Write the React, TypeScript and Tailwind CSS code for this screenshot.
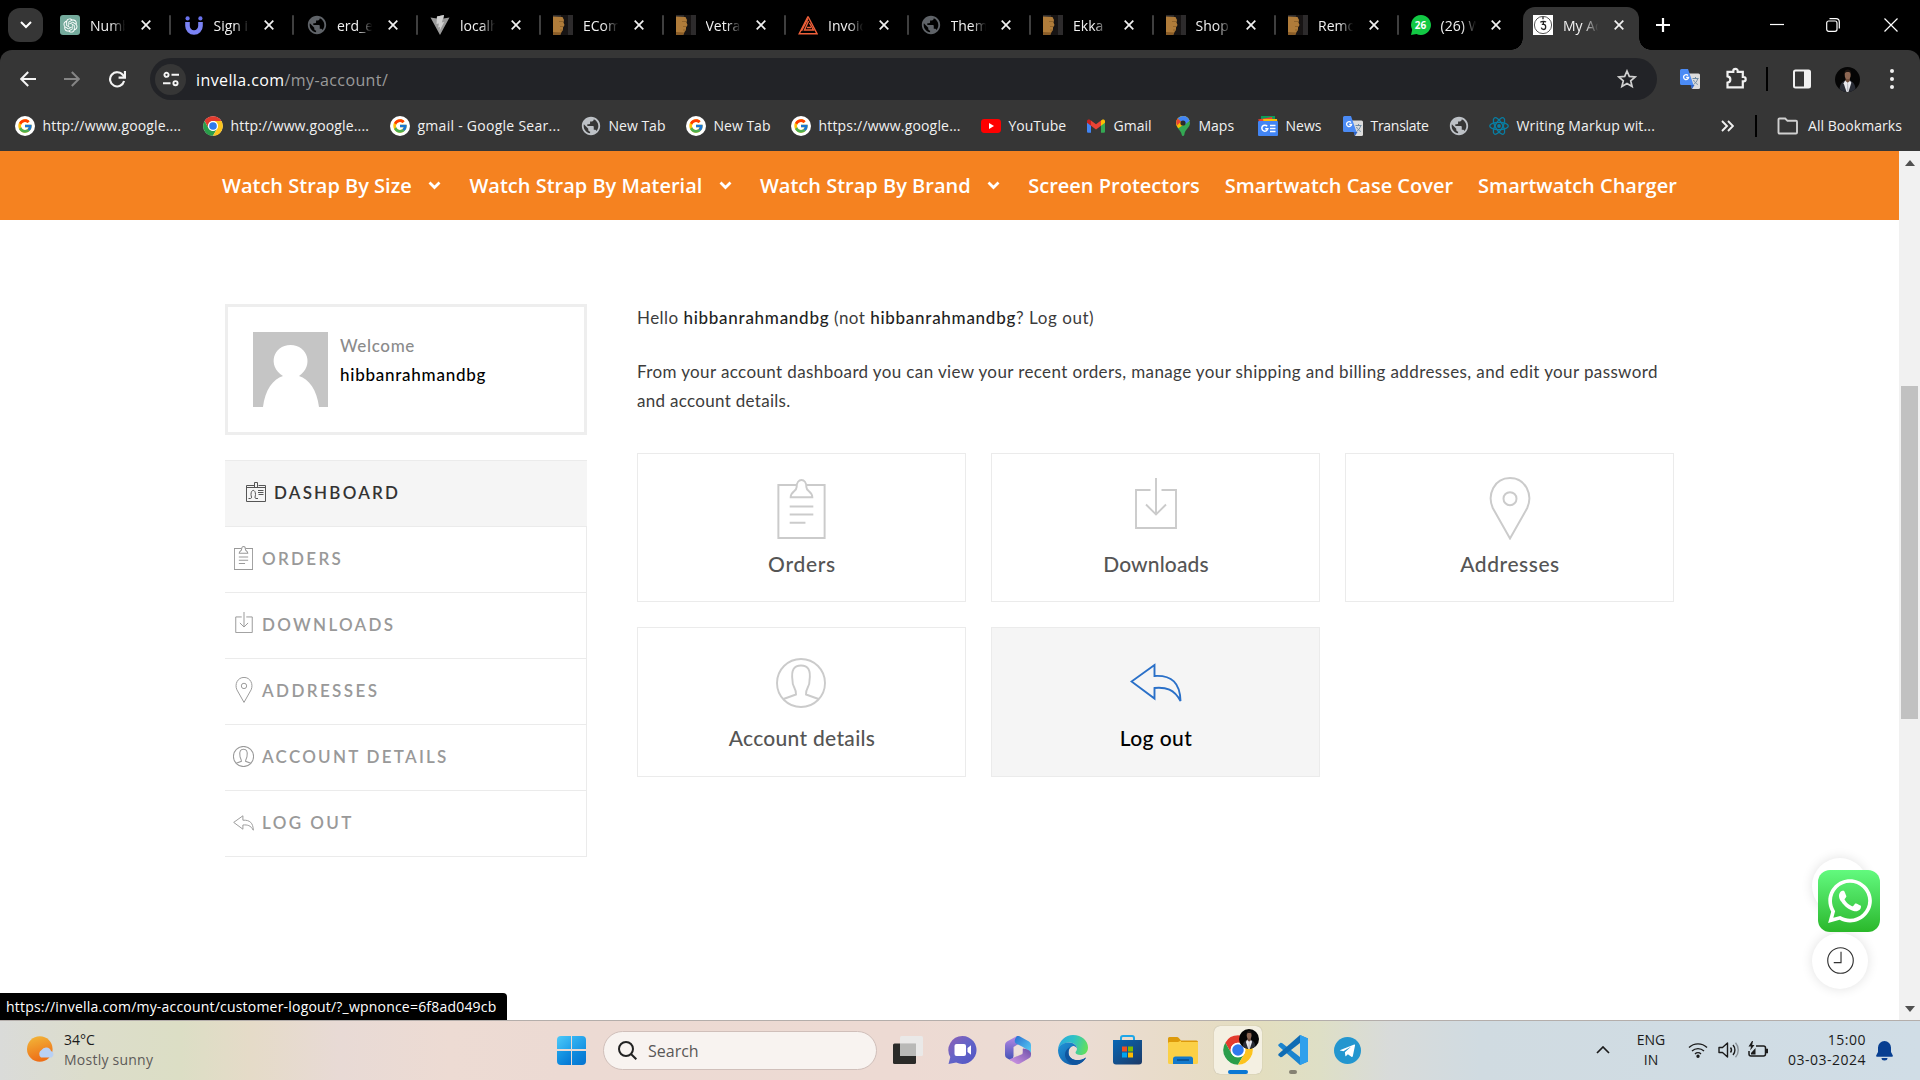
import React from "react";
import { FcGoogle } from "react-icons/fc";
import { MdPublic } from "react-icons/md";
import { RiOpenaiFill } from "react-icons/ri";
import { FaWhatsapp } from "react-icons/fa";

type P = { className?: string };

/* ---------- favicons ---------- */

const OpenAi = () => (
  <div className="flex size-5 items-center justify-center rounded-[3px] bg-[#74aa9c] text-white">
    <RiOpenaiFill className="size-[17px]" />
  </div>
);

const Magnet = () => (
  <svg viewBox="0 0 20 20" className="size-5">
    <path d="M3.5 7v4a6.5 6.5 0 0 0 13 0V7" fill="none" stroke="#7b83f5" strokeWidth="4.6" />
    <circle cx="3.6" cy="3.4" r="2.1" fill="#6a72ee" />
    <circle cx="16.4" cy="3.4" r="2.1" fill="#6a72ee" />
  </svg>
);

const Globe = ({ className = "text-[#5f6368]" }: P) => (
  <div className="flex size-5 items-center justify-center">
    <div className={className}>
      <MdPublic className="size-[22px]" />
    </div>
  </div>
);

const Vite = () => (
  <svg viewBox="0 0 20 20" className="size-5">
    <path d="M.5 2.500 10 20 19.500 2.500 13.500 3.500 14 0 7 1.500 6.800 3.600Z" fill="#9a9a9a" />
    <path d="M14 0 7 1.500 6.500 9l2.400-.5-.8 4 2-.6L9.500 16l4.700-9-2.400.4Z" fill="#d0d0d0" />
  </svg>
);

const Portrait = () => (
  <svg viewBox="0 0 20 20" className="size-5">
    <rect width="20" height="20" fill="#2d2b2c" />
    <path d="M8 0h7v20H8Z" fill="#171414" />
    <path d="M0 1.500 9.500 2 11 5 10.500 7.500 11.500 10 10 12.500 10 15 8.500 17 7 20H0Z" fill="#b07c3a" />
    <path d="M0 17 8.500 17.500 7 20H0Z" fill="#8a5d28" />
    <path d="M6 6.500h4M7 11.500h3.500M7 15h3" stroke="#7a5423" strokeWidth=".6" />
  </svg>
);

const Triangle = () => (
  <svg viewBox="0 0 20 20" className="size-5" fill="none" stroke="#f0603a" strokeWidth="1.400">
    <path d="M10 1.500 1.200 18.700H19L10 1.500" />
    <path d="M10.500 6 6.500 15h9L11.500 8M3.500 16 10 3.500M9 12.500h4" />
  </svg>
);

const WhatsTab = () => (
  <div className="relative flex size-5 items-center justify-center">
    <svg viewBox="0 0 20 20" className="absolute inset-0 size-5">
      <path d="M10 0a10 10 0 1 1-4.600 18.900L0 20l1.200-5.300A10 10 0 0 1 10 0Z" fill="#12c944" />
    </svg>
    <span className="relative text-[10px] font-bold text-white">26</span>
  </div>
);

const Invella = () => (
  <svg viewBox="0 0 20 20" className="size-5">
    <rect width="20" height="20" fill="#fff" />
    <circle cx="10" cy="10" r="8.600" fill="none" stroke="#444" strokeWidth=".9" />
    <path d="M7.300 7.200C9 6 12 6 13 7.200M10 2v2.200M8.800 9.300h1.900c2.600 0 2.600 5 .2 5.200-1.500 0-2.400-.8-2.600-1.800M10.400 9.300V6.500" fill="none" stroke="#222" strokeWidth="1.300" />
  </svg>
);

const Chrome = ({ className = "size-5" }: P) => (
  <svg viewBox="0 0 48 48" className={className}>
    <circle cx="24" cy="24" r="23.500" fill="#fff" />
    <path d="M3.640 12.250A23.500 23.500 0 0 1 44.360 12.250H24A11.750 11.750 0 0 0 13.820 29.870Z" fill="#e33b2e" />
    <path d="M3.640 12.250 13.820 29.870A11.750 11.750 0 0 0 34.180 29.870L24 47.500A23.500 23.500 0 0 1 3.640 12.250Z" fill="#2a9d4a" />
    <path d="M44.360 12.250A23.500 23.500 0 0 1 24 47.500L34.180 29.870A11.750 11.750 0 0 0 24 12.250Z" fill="#fcc31e" />
    <circle cx="24" cy="24" r="11.750" fill="#fff" />
    <circle cx="24" cy="24" r="9.200" fill="#2f79ee" />
  </svg>
);

const Google = () => (
  <div className="flex size-5 items-center justify-center rounded-full bg-white">
    <FcGoogle className="size-4" />
  </div>
);

const YouTube = () => (
  <svg viewBox="0 0 20 20" className="size-5">
    <rect y="3" width="20" height="14" rx="3.400" fill="#f00" />
    <path d="M8 7v6l5-3Z" fill="#fff" />
  </svg>
);

const Gmail = () => (
  <svg viewBox="0 0 20 20" className="size-5">
    <path d="M1 5v10.500c0 .8.600 1.300 1.300 1.300H5V8Z" fill="#4285f4" />
    <path d="M19 5v10.500c0 .8-.6 1.300-1.300 1.300H15V8Z" fill="#34a853" />
    <path d="M5 4.500v5.300l5 3.700 5-3.700V4.500l-5 3.800Z" fill="#ea4335" />
    <path d="M1 5v1.800l4 3V4.500l-.8-.6C2.900 2.900 1 3.500 1 5Z" fill="#c5221f" />
    <path d="M19 5v1.800l-4 3V4.500l.8-.6C17.100 2.900 19 3.500 19 5Z" fill="#fbbc04" />
  </svg>
);

const Maps = () => (
  <svg viewBox="0 0 14 20" className="h-5 w-3.5">
    <path d="M7 0a7 7 0 0 1 7 7c0 4.500-5 6-5.600 11.500Q8 20 7 20t-1.400-1.500C5.200 14.500 0 12 0 7a7 7 0 0 1 7-7Z" fill="#34a853" />
    <path d="M7 0a7 7 0 0 1 6.600 4.700L2.300 12.200C1 10.700 0 9 0 7a7 7 0 0 1 7-7Z" fill="#fbbc04" />
    <path d="M7 0a7 7 0 0 1 6.600 4.700L8.500 9 1.600 2.500A7 7 0 0 1 7 0Z" fill="#4285f4" />
    <path d="M1.600 2.500 5 5.500 1 9.500A7 7 0 0 1 1.600 2.500Z" fill="#ea4335" />
    <circle cx="7" cy="7" r="2.600" fill="#2b2b2b" />
  </svg>
);

const News = () => (
  <svg viewBox="0 0 20 20" className="size-5">
    <path d="M3 0h14v6H3Z" fill="#0c9d58" />
    <path d="M0 3.500 14 1l1 4H1Z" fill="#ea4335" />
    <path d="M5 3h14l.5 5H6Z" fill="#fbbc04" />
    <rect y="5" width="20" height="15" rx="1" fill="#4285f4" />
    <path d="M12 9.500h5.500M12 12.500h5.500M12 15.500h5.500" stroke="#fff" strokeWidth="1.500" />
    <path d="M9.200 10.300a3 3 0 1 0 .6 2.400H7.200" fill="none" stroke="#fff" strokeWidth="1.500" />
  </svg>
);

const TranslateIcon = () => (
  <svg viewBox="0 0 20 20" className="size-5">
    <path d="M8 4.500h10.500A1.500 1.500 0 0 1 20 6v12.500a1.500 1.500 0 0 1-1.500 1.500H12Z" fill="#dcdcdc" />
    <path d="M12.500 9.500h6M15.500 8v1.500M17.800 9.500c-.8 3-2.800 5-4.300 6M13.500 11c.8 2 2.500 3.500 4.300 4.500" fill="none" stroke="#6f8ba3" strokeWidth="1" />
    <path d="M12 20l-1.500-4h4Z" fill="#2d63c8" />
    <path d="M1.500 0H8l5.500 16h-12A1.500 1.500 0 0 1 0 14.500v-13A1.500 1.500 0 0 1 1.500 0Z" fill="#4b8bf5" />
    <path d="M8 6.500a2.500 2.500 0 1 0 .6 2H6.200" fill="none" stroke="#fff" strokeWidth="1.300" />
  </svg>
);

const ReactIcon = () => (
  <svg viewBox="0 0 20 20" className="size-5" fill="none" stroke="#087ea4" strokeWidth="1.300">
    <ellipse cx="10" cy="10" rx="9.300" ry="3.700" />
    <ellipse cx="10" cy="10" rx="9.300" ry="3.700" transform="rotate(60 10 10)" />
    <ellipse cx="10" cy="10" rx="9.300" ry="3.700" transform="rotate(120 10 10)" />
    <circle cx="10" cy="10" r="1.900" fill="#087ea4" stroke="none" />
  </svg>
);

const Profile = ({ className = "size-[25px]" }: P) => (
  <svg viewBox="0 0 26 26" className={className}>
    <defs>
      <clipPath id="profileClip">
        <circle cx="13" cy="13" r="13" />
      </clipPath>
    </defs>
    <g clipPath="url(#profileClip)">
      <rect width="26" height="26" fill="#050505" />
      <path d="M4.500 26c0-7 2-10.500 6-12h5c4 1.500 6 5 6 12Z" fill="#292c35" />
      <path d="M10.500 14h5l1.500 2.500-3 9.500h-2L9 17Z" fill="#e9e9ee" />
      <path d="M12.700 17h.9l.4 7-.8 2-.8-2Z" fill="#b9bac2" />
      <path d="M11 11h4.500v3.500l-2.300 2-2.200-2Z" fill="#6e4d3c" />
      <ellipse cx="13.200" cy="8" rx="3.100" ry="4.700" fill="#8d6753" />
      <path d="M9.800 7.200C9.200 1 17.300 1 16.700 7.200 16 4.700 10.500 4.700 9.800 7.200Z" fill="#1d1512" />
    </g>
  </svg>
);

/* ---------- browser chrome ---------- */

const Cross = () => (
  <svg viewBox="0 0 10 10" className="size-2.5" stroke="#f1f1f1" strokeWidth="1.700" fill="none">
    <path d="M.7.700 9.300 9.300M9.300.700.7 9.300" />
  </svg>
);

const tabs: { icon: React.ReactNode; title: string; w: string }[] = [
  { icon: <OpenAi />, title: "Numb", w: "w-[123.5px]" },
  { icon: <Magnet />, title: "Sign in", w: "w-[123.5px]" },
  { icon: <Globe />, title: "erd_e", w: "w-[123px]" },
  { icon: <Vite />, title: "localh", w: "w-[123px]" },
  { icon: <Portrait />, title: "ECom", w: "w-[122.5px]" },
  { icon: <Portrait />, title: "Vetra", w: "w-[122.5px]" },
  { icon: <Triangle />, title: "Invoic", w: "w-[122.5px]" },
  { icon: <Globe />, title: "Them", w: "w-[122.5px]" },
  { icon: <Portrait />, title: "Ekka", w: "w-[122.5px]" },
  { icon: <Portrait />, title: "Shop", w: "w-[122.5px]" },
  { icon: <Portrait />, title: "Remo", w: "w-[122.5px]" },
  { icon: <WhatsTab />, title: "(26) W", w: "w-[122.5px]" },
];

const TabBody = ({ icon, title }: { icon: React.ReactNode; title: string }) => (
  <>
    {icon}
    <span className="ml-2.5 w-[36px] shrink-0 overflow-hidden pt-px text-[14px] leading-5 whitespace-nowrap text-[#f1f1f1] [mask-image:linear-gradient(to_right,#000_58%,transparent_98%)]">
      {title}
    </span>
    <span className="ml-[14.5px]">
      <Cross />
    </span>
  </>
);

const TabStrip = () => (
  <div className="flex h-[50px] bg-black">
    <div className="mt-2 ml-2 flex h-[34px] w-[35px] items-center justify-center rounded-xl bg-[#363636]">
      <svg viewBox="0 0 12 8" className="h-2 w-3" fill="none" stroke="#fff" strokeWidth="2">
        <path d="m1 1 5 5 5-5" />
      </svg>
    </div>
    <div className="ml-[5px] flex">
      {tabs.map((t, i) => (
        <div key={i} className={`flex items-center pl-3 ${t.w}`}>
          <TabBody icon={t.icon} title={t.title} />
          {i < tabs.length - 1 && <span className="ml-[18px] h-5 w-[2px] rounded bg-[#3f3f3f]" />}
        </div>
      ))}
    </div>
    <div className="relative mt-[7px] ml-[2px] flex h-[43px] w-[116px] items-center rounded-t-xl bg-[#363636] pb-[7px] pl-[10px]">
      <span className="absolute bottom-0 -left-3 size-3 bg-[radial-gradient(circle_at_0_0,#000_11.5px,#363636_12px)]" />
      <span className="absolute -right-3 bottom-0 size-3 bg-[radial-gradient(circle_at_100%_0,#000_11.5px,#363636_12px)]" />
      <TabBody icon={<Invella />} title="My Ac" />
    </div>
    <svg viewBox="0 0 14 14" className="mt-[18px] ml-[17px] size-3.5" stroke="#fff" strokeWidth="2.200">
      <path d="M7 0v14M0 7h14" />
    </svg>
    <svg viewBox="0 0 14 14" className="mt-[18px] ml-auto size-3.5" stroke="#fff" strokeWidth="1.200">
      <path d="M0 6.500h14" />
    </svg>
    <svg viewBox="0 0 14 14" className="mt-[18px] ml-[42px] size-3.5" stroke="#fff" strokeWidth="1.200" fill="none">
      <rect x=".7" y="3" width="10.300" height="10.300" rx="2" />
      <path d="M3.500.700H10a3.300 3.300 0 0 1 3.300 3.300v6.500" />
    </svg>
    <svg viewBox="0 0 14 14" className="mt-[18px] mr-[22px] ml-11 size-3.5" stroke="#fff" strokeWidth="1.200">
      <path d="m.5.500 13 13m0-13-13 13" />
    </svg>
  </div>
);

const Toolbar = () => (
  <div className="bg-black">
    <div className="flex h-[58px] items-center rounded-t-xl bg-[#363636]">
      <svg viewBox="0 0 16 16" className="ml-5 size-4" fill="none" stroke="#f4f4f4" strokeWidth="2">
        <path d="M16 8H1.500M8.200 1 1.200 8l7 7" />
      </svg>
      <svg viewBox="0 0 16 16" className="ml-[28px] size-4" fill="none" stroke="#858585" strokeWidth="2">
        <path d="M0 8h14.500M7.800 1l7 7-7 7" />
      </svg>
      <svg viewBox="0 0 16 16" className="ml-[29px] size-[17px]" fill="none" stroke="#f4f4f4" strokeWidth="2">
        <path d="M14.200 9.500A6.700 6.700 0 1 1 13 3.700l1.600 1.800M15 0v6.200H9" />
      </svg>
      <div className="ml-6 flex h-[42px] w-[1507px] items-center rounded-full bg-[#222327] pl-[5px]">
        <div className="flex size-[31px] items-center justify-center rounded-full bg-[#363636]">
          <svg viewBox="0 0 16 16" className="size-4" fill="none" stroke="#f4f4f4" strokeWidth="1.900">
            <circle cx="3.500" cy="3.800" r="2.100" />
            <path d="M8.500 3.800H16M0 12.200h7.500" />
            <circle cx="12.500" cy="12.200" r="2.100" />
          </svg>
        </div>
        <span className="ml-[10px] pt-0.5 text-[16px] leading-6 tracking-[0.4px] text-white">
          invella.com<span className="text-[#9a9a9a]">/my-account/</span>
        </span>
        <svg viewBox="0 0 20 20" className="mr-5 ml-auto size-5" fill="none" stroke="#d0d0d0" strokeWidth="1.700">
          <path d="m10 2 2.300 5.400 5.900.5-4.500 3.900 1.400 5.700L10 14.400l-5.100 3.100 1.400-5.700L1.800 7.900l5.900-.5Z" />
        </svg>
      </div>
      <div className="ml-[23px]">
        <TranslateIcon />
      </div>
      <svg viewBox="0 0 24 24" className="ml-[24px] size-6 -translate-y-px" fill="none" stroke="#f1f1f1" strokeWidth="2.200">
        <path d="M3.500 5.800H9.300V5a2.200 2.200 0 0 1 4.400 0v.8H18.800V11h.7a2.200 2.200 0 0 1 0 4.400h-.7v6H3.500v-4.800c3.800-.5 3.800-5.700 0-6.200Z" />
      </svg>
      <span className="ml-[18px] h-6 w-[2px] bg-black" />
      <svg viewBox="0 0 20 20" className="ml-[24px] size-5" fill="none" stroke="#f1f1f1" strokeWidth="2">
        <rect x="2" y="1.500" width="16" height="17" rx="1.500" />
        <path d="M12 2h6v16h-6Z" fill="#f1f1f1" stroke="none" />
      </svg>
      <span className="ml-[23px]">
        <Profile />
      </span>
      <svg viewBox="0 0 4 20" className="ml-[30px] h-5 w-1" fill="#f1f1f1">
        <circle cx="2" cy="2" r="2" />
        <circle cx="2" cy="10" r="2" />
        <circle cx="2" cy="18" r="2" />
      </svg>
    </div>
  </div>
);

const bookmarks: { w: string; icon: React.ReactNode; text?: string; t?: string }[] = [
  { w: "w-[188px]", icon: <Google />, text: "http://www.google....", t: "tracking-[0.15px]" },
  { w: "w-[187px]", icon: <Chrome />, text: "http://www.google....", t: "tracking-[0.15px]" },
  { w: "w-[191px]", icon: <Google />, text: "gmail - Google Sear...", t: "tracking-[0.27px]" },
  { w: "w-[105px]", icon: <Globe className="text-[#bdc1c6]" />, text: "New Tab" },
  { w: "w-[105px]", icon: <Google />, text: "New Tab" },
  { w: "w-[190px]", icon: <Google />, text: "https://www.google...", t: "tracking-[0.18px]" },
  { w: "w-[105px]", icon: <YouTube />, text: "YouTube" },
  { w: "w-[89px]", icon: <Gmail />, text: "Gmail" },
  { w: "w-[83px]", icon: <Maps />, text: "Maps" },
  { w: "w-[85px]", icon: <News />, text: "News" },
  { w: "w-[106px]", icon: <TranslateIcon />, text: "Translate", t: "tracking-[-0.28px]" },
  { w: "w-[40px]", icon: <Globe className="text-[#bdc1c6]" /> },
  { w: "w-[232px]", icon: <ReactIcon />, text: "Writing Markup wit...", t: "tracking-[0.16px]" },
];

const Bookmarks = () => (
  <div className="flex h-[43px] items-center bg-[#363636] pb-[7px] pl-[15px] text-[14px] leading-5 text-[#f1f1f1]">
    {bookmarks.map((b, i) => (
      <div key={i} className={`flex shrink-0 items-center gap-[7.5px] whitespace-nowrap ${b.w}`}>
        <span className="flex min-w-4 shrink-0 justify-center">{b.icon}</span>
        {b.text && <span className={b.t ?? ""}>{b.text}</span>}
      </div>
    ))}
    <svg viewBox="0 0 13 12" className="h-3 w-[13px]" fill="none" stroke="#f1f1f1" strokeWidth="1.900">
      <path d="m1 1 5 5-5 5M7 1l5 5-5 5" />
    </svg>
    <span className="ml-[21px] h-[22px] w-[2px] bg-black" />
    <svg viewBox="0 0 22 18" className="ml-5 h-[18px] w-[22px]" fill="none" stroke="#d0d0d0" strokeWidth="1.900">
      <path d="M2.500 1.500h5.700l2.300 2.300h8.500a1 1 0 0 1 1 1v10.700a1 1 0 0 1-1 1h-16.500a1 1 0 0 1-1-1v-13a1 1 0 0 1 1-1Z" />
    </svg>
    <span className="ml-[9px] tracking-[0.05px]">All Bookmarks</span>
  </div>
);

/* ---------- line icons of the account area ---------- */

const ClipboardIcon = ({ className }: P) => (
  <svg viewBox="0 0 49 61" className={className} fill="none" stroke="currentColor">
    <path d="M19 6H1v54h47V6H30" />
    <path d="M19.500 8.500c0-10 10-10 10 0 0 4 6 4 6 10h-22c0-6 6-6 6-10Z" />
    <path d="M12.500 28h24M12.500 36h24M12.500 44.500h16" />
  </svg>
);
const DownloadIcon = ({ className }: P) => (
  <svg viewBox="0 0 42 51" className={className} fill="none" stroke="currentColor">
    <path d="M15.500 12H1v38h40V12H26.500M21 0v36.500M11 26.500l10 10 10-10" />
  </svg>
);
const PinIcon = ({ className }: P) => (
  <svg viewBox="0 0 42 64" className={className} fill="none" stroke="currentColor">
    <path d="M21 62.500 3.500 31.500C-2.500 18 5 1 21 1s23.500 17 17.500 30.500Z" />
    <circle cx="21" cy="22" r="6.600" />
  </svg>
);
const AccountIcon = ({ className }: P) => (
  <svg viewBox="0 0 50 50" className={className} fill="none" stroke="currentColor">
    <circle cx="25" cy="25" r="24" />
    <path d="M7.500 41 20 36.500C20.500 30 16 29 16.500 22.500 15 12 18 7.500 25 7.500s10 4.500 8.500 15C34 29 29.500 30 30 36.500L42.500 41" />
  </svg>
);
const LogoutIcon = ({ className }: P) => (
  <svg viewBox="0 0 52 40" className={className} fill="none" stroke="currentColor">
    <path d="M24.500 2 1.500 18.500l23 17V25C36 24 44 26 50.500 38 50 20 42 12 24.500 13Z" />
  </svg>
);
const BadgeIcon = ({ className }: P) => (
  <svg viewBox="0 0 20 20" className={className} fill="none" stroke="currentColor" strokeWidth="1">
    <path d="M.500 3.500v16h19v-16h-7M.500 3.500h8M.500 5.500h19M8.500 5.500v-5h3v5M12 8.500h5.500M12 10.500h5.500M12.500 12.500h5" />
    <path d="M2.500 16.500h2c2-.5.500-2 .5-4 0-5.500 4.500-5.500 4.500 0 0 2-1.500 3.500.5 4h2" />
  </svg>
);

const Caret = ({ className = "" }: P) => (
  <svg viewBox="0 0 13 10" className={`h-2.5 w-[13px] ${className}`} fill="none" stroke="#fff" strokeWidth="2.800">
    <path d="m1.500 1.500 5 5 5-5" />
  </svg>
);

const navItems = [
  { text: "Watch Strap By Size", caret: true },
  { text: "Watch Strap By Material", caret: true },
  { text: "Watch Strap By Brand", caret: true },
  { text: "Screen Protectors", caret: false },
  { text: "Smartwatch Case Cover", caret: false },
  { text: "Smartwatch Charger", caret: false },
];

const side = [
  { text: "ORDERS", icon: <ClipboardIcon className="h-6 w-[19px] -translate-y-[2px] [stroke-width:2.6]" />, t: "tracking-[2.3px]" },
  { text: "DOWNLOADS", icon: <DownloadIcon className="h-[21px] w-[18px] -translate-y-[3px] [stroke-width:2.4]" />, t: "tracking-[2.3px]" },
  { text: "ADDRESSES", icon: <PinIcon className="h-[26px] w-[18px] -translate-y-[2px] [stroke-width:2.4]" />, t: "tracking-[2.4px]" },
  { text: "ACCOUNT DETAILS", icon: <AccountIcon className="size-[21px] -translate-y-px [stroke-width:2.4]" />, t: "tracking-[2.25px]" },
  { text: "LOG OUT", icon: <LogoutIcon className="h-4 w-[21px] -translate-y-px [stroke-width:2.4]" />, t: "tracking-[2.4px]" },
];

const cards = [
  { text: "Orders", icon: <ClipboardIcon className="h-[60px] w-[49px] -translate-y-px [stroke-width:2]" />, t: "tracking-[0.7px]" },
  { text: "Downloads", icon: <DownloadIcon className="h-[51px] w-[42px] -translate-y-[6px] [stroke-width:1.9]" />, t: "tracking-[0.13px]" },
  { text: "Addresses", icon: <PinIcon className="h-[63px] w-[42px] -translate-y-px [stroke-width:2]" />, t: "tracking-[0.55px]" },
  { text: "Account details", icon: <AccountIcon className="size-[50px] -translate-x-px -translate-y-px [stroke-width:1.9]" />, t: "tracking-[0.3px]" },
  { text: "Log out", icon: <LogoutIcon className="h-[40px] w-[52px] -translate-y-px [stroke-width:1.9]" />, t: "tracking-[0.4px]", active: true },
];

const AccountPage = () => (
  <div className="relative flex min-h-0 flex-1 bg-white">
    <div className="flex flex-1 flex-col">
      <nav className="flex h-[69px] items-center gap-[25px] bg-[#f58220] pl-[222px] text-[20px] leading-7 font-semibold text-white">
        {navItems.map((n) => (
          <div key={n.text} className="flex items-center whitespace-nowrap">
            {n.text}
            {n.caret && <Caret className="mr-[3px] ml-[16.6px]" />}
          </div>
        ))}
      </nav>
      <div className="flex px-[225px] pt-[84px] font-[Lato,sans-serif]">
        <aside className="w-[362px] shrink-0">
          <div className="flex h-[131px] border-[3px] border-[#eeeeee] pt-[25px] pl-[25px]">
            <svg viewBox="0 0 75 75" className="size-[75px]">
              <rect width="75" height="75" fill="#c5c5c5" />
              <path d="M10 75C12 58 20 47 30 44 14 34 20 13 37.500 13S61 34 46 44c10 3 18 14 20 31Z" fill="#fff" />
            </svg>
            <div className="-mt-px ml-3 text-[17px] leading-[29px]">
              <div className="font-medium tracking-[0.65px] text-[#8b8b8b]">Welcome</div>
              <div className="font-medium tracking-[0.75px] text-black">hibbanrahmandbg</div>
            </div>
          </div>
          <div className="mt-[25px] text-[17px] font-semibold">
            <div className="flex h-[67px] items-center border-y border-[#ebebeb] bg-[#f5f5f5] pb-px pl-[21px] text-[#333]">
              <BadgeIcon className="size-5 -translate-y-px text-[#555]" />
              <span className="ml-2 tracking-[2.2px]">DASHBOARD</span>
            </div>
            {side.map((s) => (
              <div key={s.text} className="flex h-[66px] items-center border-r border-b border-[#ebebeb] pl-2 text-[#999]">
                <span className="flex w-[21px] justify-center">{s.icon}</span>
                <span className={`ml-2 -translate-y-px ${s.t}`}>{s.text}</span>
              </div>
            ))}
          </div>
        </aside>
        <main className="-mt-px ml-[50px] w-[1037px] shrink-0 text-[17px] leading-[29px] text-[#3c3c3c]">
          <p className="tracking-[0.45px] whitespace-nowrap">
            Hello <b className="font-medium tracking-[0.73px] text-[#222]">hibbanrahmandbg</b> (not{" "}
            <b className="font-medium tracking-[0.73px] text-[#222]">hibbanrahmandbg</b>
            <span className="tracking-[0.55px]">? Log out)</span>
          </p>
          <p className="mt-[25px] tracking-[0.382px] whitespace-nowrap">
            From your account dashboard you can view your recent orders, manage your shipping and billing addresses, and edit your password
            <br />
            <span className="tracking-[0.3px]">and account details.</span>
          </p>
          <div className="mt-[38px] grid grid-cols-[329px_329px_329px] grid-rows-[149px_150px] gap-[25px]">
            {cards.map((c) => (
              <div
                key={c.text}
                className={`flex flex-col items-center border border-[#ebebeb] pt-[23px] text-[21px] font-medium ${
                  c.active ? "bg-[#f5f5f5] text-black" : "text-[#555]"
                }`}
              >
                <span className={`flex h-[65px] items-center ${c.active ? "text-[#2a70c8]" : "text-[#cbcbcb]"}`}>{c.icon}</span>
                <span className={`mt-[7px] ml-px ${c.t}`}>{c.text}</span>
              </div>
            ))}
          </div>
        </main>
      </div>
    </div>

    <div className="flex w-[21px] flex-col items-center bg-[#f1f1f1] pt-[9px] pb-2">
      <svg viewBox="0 0 10 6" className="h-1.5 w-2.5" fill="#505050">
        <path d="M0 6h10L5 0Z" />
      </svg>
      <div className="mt-[220px] h-[333px] w-[17px] bg-[#c1c1c1]" />
      <svg viewBox="0 0 10 6" className="mt-auto h-1.5 w-2.5" fill="#505050">
        <path d="M0 0h10L5 6Z" />
      </svg>
    </div>

    <div className="absolute right-[52px] bottom-[106px] size-14 rounded-full bg-white shadow-[0_0_12px_rgba(0,0,0,0.12)]" />
    <div className="absolute right-[52px] bottom-[31px] flex size-14 items-center justify-center rounded-full bg-white shadow-[0_0_12px_rgba(0,0,0,0.12)]">
      <svg viewBox="0 0 26 26" className="size-[27px] -translate-y-px" fill="none" stroke="#333" strokeWidth="1.100">
        <circle cx="13" cy="13" r="12.300" />
        <path d="M13.500 4.500v10.500H6.500" />
      </svg>
    </div>
    <div className="absolute right-10 bottom-[88px] flex size-[62px] items-center justify-center rounded-xl bg-linear-to-b from-[#62fa7e] to-[#2ab829] text-white">
      <FaWhatsapp className="size-[50px] translate-x-px" />
    </div>
    <div className="absolute bottom-0 left-0 flex h-[27px] w-[507px] items-center rounded-tr bg-black pl-[6px] text-[14px] tracking-[0.2px] whitespace-nowrap text-white">
      https://invella.com/my-account/customer-logout/?_wpnonce=6f8ad049cb
    </div>
  </div>
);

/* ---------- taskbar ---------- */

const Weather = () => (
  <svg viewBox="0 0 28 26" className="h-[26px] w-7">
    <defs>
      <linearGradient id="sun" x1="0" y1="0" x2="0.300" y2="1">
        <stop offset="0" stopColor="#f2b93a" />
        <stop offset="1" stopColor="#ee6f17" />
      </linearGradient>
    </defs>
    <circle cx="12.800" cy="13" r="12.800" fill="url(#sun)" />
    <path d="M14 21.500a4.500 4.500 0 0 1 .5-7.500 5.300 5.300 0 0 1 9.500 1 3.500 3.500 0 0 1 .5 6.500Z" fill="#b9d0f4" />
  </svg>
);

const Start = () => (
  <div className="grid size-[29px] grid-cols-2 gap-[1.500px]">
    <span className="rounded-tl-sm bg-linear-to-br from-[#4cc9f8] to-[#1fa1ea]" />
    <span className="rounded-tr-sm bg-linear-to-br from-[#35b5f3] to-[#1592e2]" />
    <span className="rounded-bl-sm bg-linear-to-br from-[#1da0e8] to-[#0575d3]" />
    <span className="rounded-br-sm bg-linear-to-br from-[#128fe0] to-[#0573d0]" />
  </div>
);

const TaskView = () => (
  <svg viewBox="0 0 30 28" className="h-7 w-[30px]">
    <rect y="7.500" width="23" height="20.500" rx="1.500" fill="#2b2b29" />
    <rect x="7" width="23" height="20" rx="1.500" fill="#e9e9e9" opacity=".93" />
    <path d="M7 7.500h16V20H7Z" fill="#b9b9b7" />
  </svg>
);

const Chat = () => (
  <svg viewBox="0 0 29 28" className="h-7 w-[29px]">
    <defs>
      <linearGradient id="chat" x1="0" y1="0" x2="1" y2="1">
        <stop offset="0" stopColor="#8e5fb5" />
        <stop offset=".5" stopColor="#6264c8" />
        <stop offset="1" stopColor="#5154c4" />
      </linearGradient>
    </defs>
    <path d="M14.500 0a14 14 0 1 1-6.300 26.500L.5 28l1.800-7A14 14 0 0 1 14.500 0Z" fill="url(#chat)" />
    <rect x="6.500" y="8" width="11.500" height="12" rx="2" fill="#fff" />
    <path d="m19.500 12 3.500-2.800v9.600L19.500 16Z" fill="#fff" />
  </svg>
);

const Office = () => (
  <svg viewBox="0 0 26 28" className="h-7 w-[26px]">
    <defs>
      <linearGradient id="of1" x1="0" y1="0" x2="0" y2="1">
        <stop offset="0" stopColor="#b98ae6" />
        <stop offset="1" stopColor="#3f50b5" />
      </linearGradient>
      <linearGradient id="of2" x1="0" y1="0" x2="1" y2="1">
        <stop offset="0" stopColor="#2a6fd0" />
        <stop offset="1" stopColor="#59d0f5" />
      </linearGradient>
      <linearGradient id="of3" x1="0" y1="1" x2="1" y2="0">
        <stop offset="0" stopColor="#d79be8" />
        <stop offset="1" stopColor="#6b4fa8" />
      </linearGradient>
    </defs>
    <path d="M12 0 2 5.500Q0 6.700 0 9v10q0 2.200 2 3.300L6 24.500Q9 22 8.500 19V11L17 6Z" fill="url(#of1)" />
    <path d="M12 0q1.500-.4 3 .4l9 5.100Q26 6.700 26 9v8q-2-3-5-4l-4-2.500-6-3Q8 5 12 0Z" fill="url(#of2)" />
    <path d="M4 23.500 11 27.500q2 1 4 0l9-5.200q2-1.100 2-3.300v-2q-1-3-5-4-3.500-1-3.500 0v5Z" fill="url(#of3)" />
    <path d="M9 11.500 13 9l4.500 2.500v5L13 19l-4-2.500Z" fill="#eedfdb" />
  </svg>
);

const Edge = () => (
  <svg viewBox="0 0 30 30" className="size-[30px]">
    <defs>
      <linearGradient id="edgeTop" x1="0" y1=".3" x2="1" y2=".5">
        <stop offset="0" stopColor="#2aa7e0" />
        <stop offset=".5" stopColor="#2fc3c4" />
        <stop offset="1" stopColor="#62df5c" />
      </linearGradient>
      <linearGradient id="edgeLow" x1="0" y1="0" x2="1" y2="1">
        <stop offset="0" stopColor="#2094d8" />
        <stop offset="1" stopColor="#0d4c9a" />
      </linearGradient>
    </defs>
    <path d="M0 14.500C1 5.500 7.500 0 15 0c9 0 15 6 15 12.500 0 5-3.500 7.500-7.500 7.500-3 0-5-1-5-2.500 0-1 1.500-1.500 1.500-4 0-3-3-6-7.500-6C6 7.500 2 10 0 14.500Z" fill="url(#edgeTop)" />
    <path d="M0 15C1 10 5.500 7.500 11 7.500c4.500 0 8 3 8 6-1-2-3-2.500-4-2.500-3 1-4.500 3.500-4.500 6.500 0 5 4.500 8 9.500 8 3.500 0 6-1.500 8-3-2 4-7 7.500-13 7.500C6.500 30 0 23.500 0 15Z" fill="url(#edgeLow)" />
    <path d="M12.500 11.700C8 14 6 18 7.500 22.500S14 30 17 30c5-.5 9-3.500 11-7.500-8 5-17.500 2.500-17.500-5 0-2.500.8-4.500 2-5.800Z" fill="#0f559f" />
  </svg>
);

const Store = () => (
  <svg viewBox="0 0 29 30" className="h-[30px] w-[29px]">
    <defs>
      <linearGradient id="store" x1="0" y1="0" x2="1" y2="1">
        <stop offset="0" stopColor="#0867b5" />
        <stop offset="1" stopColor="#1c3a67" />
      </linearGradient>
    </defs>
    <path d="M8 6V3q0-2 2-2h9q2 0 2 2v3" fill="none" stroke="#1ea6e8" strokeWidth="2" />
    <path d="M0 5h29v21.500a3 3 0 0 1-3 3H3a3 3 0 0 1-3-3Z" fill="url(#store)" />
    <path d="M9 11.500h5v5H9Z" fill="#f25022" />
    <path d="M15 11.500h5v5h-5Z" fill="#7fba00" />
    <path d="M9 17.500h5v5H9Z" fill="#00a4ef" />
    <path d="M15 17.500h5v5h-5Z" fill="#ffb900" />
  </svg>
);

const Explorer = () => (
  <svg viewBox="0 0 30 27" className="h-[27px] w-[30px]">
    <path d="M0 1.500Q0 0 1.500 0H9q1 0 1.800 1L13 3.500h15.500q1.500 0 1.500 1.500v5H0Z" fill="#dd9a0b" />
    <path d="M0 6.500Q0 5 1.500 5H10l3-1.500V5h17v20.500q0 1.500-1.500 1.500h-27Q0 27 0 25.500Z" fill="#fbd046" />
    <path d="M5 27v-5q0-2.500 2.500-2.500h15Q25 19.500 25 22v5Z" fill="#1379cc" />
    <path d="M9 23h12" stroke="#0a4c8a" strokeWidth="1.500" />
  </svg>
);

const VsCode = () => (
  <svg viewBox="0 0 30 30" className="size-[30px]">
    <path d="m22 0 8 3.500v23L22 30 1 11.500 0 10l2.500-2.300L4 8l18 14Z" fill="#1b84cf" />
    <path d="M22 0 1 18.500 0 20l2.500 2.300L4 22 22 8Z" fill="#0f6cb4" />
    <path d="m22 0 8 3.500v23L22 30Z" fill="#2fa0ec" />
  </svg>
);

const Telegram = () => (
  <svg viewBox="0 0 28 28" className="size-[27px]">
    <circle cx="14" cy="14" r="14" fill="#2396cf" />
    <path d="M6 13.800 21 7.800q1-.3.800 1L19.500 20q-.4 1.200-1.500.5l-3.600-2.700-1.900 1.900q-.7.500-.8-.4l-.4-3.600 6.500-5.800-8 5-3.500-.8q-.8-.3-.3-.3Z" fill="#fff" />
  </svg>
);

const Taskbar = () => (
  <div className="flex h-[60px] items-center border-t border-[#b4aeab] bg-[linear-gradient(to_right,#dadbd9_0,#dcddcb_90px,#dcdec5_180px,#e5dbc8_250px,#e8dad5_340px,#eddbd3_450px,#ecdad3_560px,#eddad3_900px,#ebdcd3_1080px,#e8dcc8_1180px,#e3debf_1260px,#dedfc6_1320px,#d8dbda_1390px,#d0dbe1_1480px,#d0dde6_1920px)] text-[14px] leading-5 text-[#1b1b1b]">
    <div className="-mt-[3px] ml-[27px]">
      <Weather />
    </div>
    <div className="-mt-0.5 ml-[9px] w-[484px]">
      <div>34°C</div>
      <div className="tracking-[0.24px] text-[#5c5a58]">Mostly sunny</div>
    </div>
    <div className="-mt-px ml-[9px] flex w-[924px] items-center">
      <Start />
      <div className="ml-[17px] flex h-[39px] w-[274px] items-center rounded-full border border-[#d0bfba] bg-[#f8f3f0] pl-[14px]">
        <svg viewBox="0 0 19 19" className="size-[19px]" fill="none" stroke="#222" strokeWidth="2">
          <circle cx="8" cy="8" r="7" />
          <path d="m13 13 5.300 5.300" />
        </svg>
        <span className="ml-[11px] pt-px text-[16px] text-[#5a5756]">Search</span>
      </div>
      <span className="ml-4"><TaskView /></span>
      <span className="ml-[25px]"><Chat /></span>
      <span className="ml-[28px]"><Office /></span>
      <span className="ml-[27px]"><Edge /></span>
      <span className="ml-[25px]"><Store /></span>
      <span className="ml-[26px]"><Explorer /></span>
      <div className="relative ml-4 flex size-12 items-center justify-center rounded-md bg-[#f4f0e2] shadow-[0_0_1px_rgba(0,0,0,0.3)]">
        <Chrome className="size-[30px]" />
        <span className="absolute top-[3px] right-[3px]">
          <Profile className="size-5" />
        </span>
        <span className="absolute bottom-0 left-[14px] h-1 w-5 rounded-full bg-[#0a78d4]" />
      </div>
      <div className="relative ml-4">
        <VsCode />
        <span className="absolute -bottom-[9px] left-[11px] h-1 w-2 rounded-full bg-[#858172]" />
      </div>
      <span className="ml-[26px]"><Telegram /></span>
    </div>
    <svg viewBox="0 0 14 8" className="-mt-0.5 ml-[115px] h-2 w-3.5 shrink-0" fill="none" stroke="#1b1b1b" strokeWidth="1.700">
      <path d="m1 7 6-6 6 6" />
    </svg>
    <div className="-mt-px ml-6 w-[34px] text-center">
      <div>ENG</div>
      <div>IN</div>
    </div>
    <svg viewBox="0 0 20 16" className="-mt-0.5 ml-5 h-4 w-5" fill="none" stroke="#1b1b1b" strokeWidth="1.400">
      <path d="M1 5.500a13 13 0 0 1 18 0M4 9a8.700 8.700 0 0 1 12 0M7 12a4.400 4.400 0 0 1 6 0" />
      <circle cx="10" cy="14.300" r="1" fill="#1b1b1b" />
    </svg>
    <svg viewBox="0 0 22 18" className="-mt-0.5 ml-[10px] h-[18px] w-[22px]" fill="none" stroke="#1b1b1b" strokeWidth="1.400">
      <path d="M1 6.500h3.500L9.500 2v14l-5-4.500H1Z" strokeLinejoin="round" />
      <path d="M12.500 6.500a4 4 0 0 1 0 5M15 4a7.500 7.500 0 0 1 0 10" />
      <path d="M17.500 1.700a11 11 0 0 1 0 14.600" stroke="#8a9298" />
    </svg>
    <svg viewBox="0 0 20 18" className="-mt-0.5 ml-[8px] h-[18px] w-5" fill="none" stroke="#1b1b1b" strokeWidth="1.500">
      <path d="M8 5h7.500a2 2 0 0 1 2 2v6a2 2 0 0 1-2 2H3a2 2 0 0 1-2-2v-3" />
      <path d="M18 8.500h1.500v3H18Z" fill="#1b1b1b" />
      <path d="M3 13.500v-1.500L7.500 7v6.500Z" fill="#1b1b1b" stroke="none" />
      <path d="M4 0 .5 5.500H3L2.200 9.500 6.500 4H4.200L5 0Z" fill="#1b1b1b" stroke="none" />
    </svg>
    <div className="-mt-0.5 ml-[19px] w-[79px] text-right tracking-[0.49px]">
      <div>15:00</div>
      <div>03-03-2024</div>
    </div>
    <svg viewBox="0 0 17 20" className="ml-[10px] h-5 w-[17px]" fill="#083f91">
      <path d="M8.500 0a6.500 6.500 0 0 1 6.500 6.500V11l1.800 3.500a.8.800 0 0 1-.7 1.200H.900a.8.800 0 0 1-.7-1.200L2 11V6.500A6.500 6.500 0 0 1 8.500 0ZM5.500 17h6a3 2.500 0 0 1-6 0Z" />
    </svg>
  </div>
);

export default function App() {
  return (
    <div className="flex h-[1080px] w-[1920px] flex-col overflow-hidden bg-white font-['Open_Sans','Noto_Sans',sans-serif]">
      <TabStrip />
      <Toolbar />
      <Bookmarks />
      <AccountPage />
      <Taskbar />
    </div>
  );
}
